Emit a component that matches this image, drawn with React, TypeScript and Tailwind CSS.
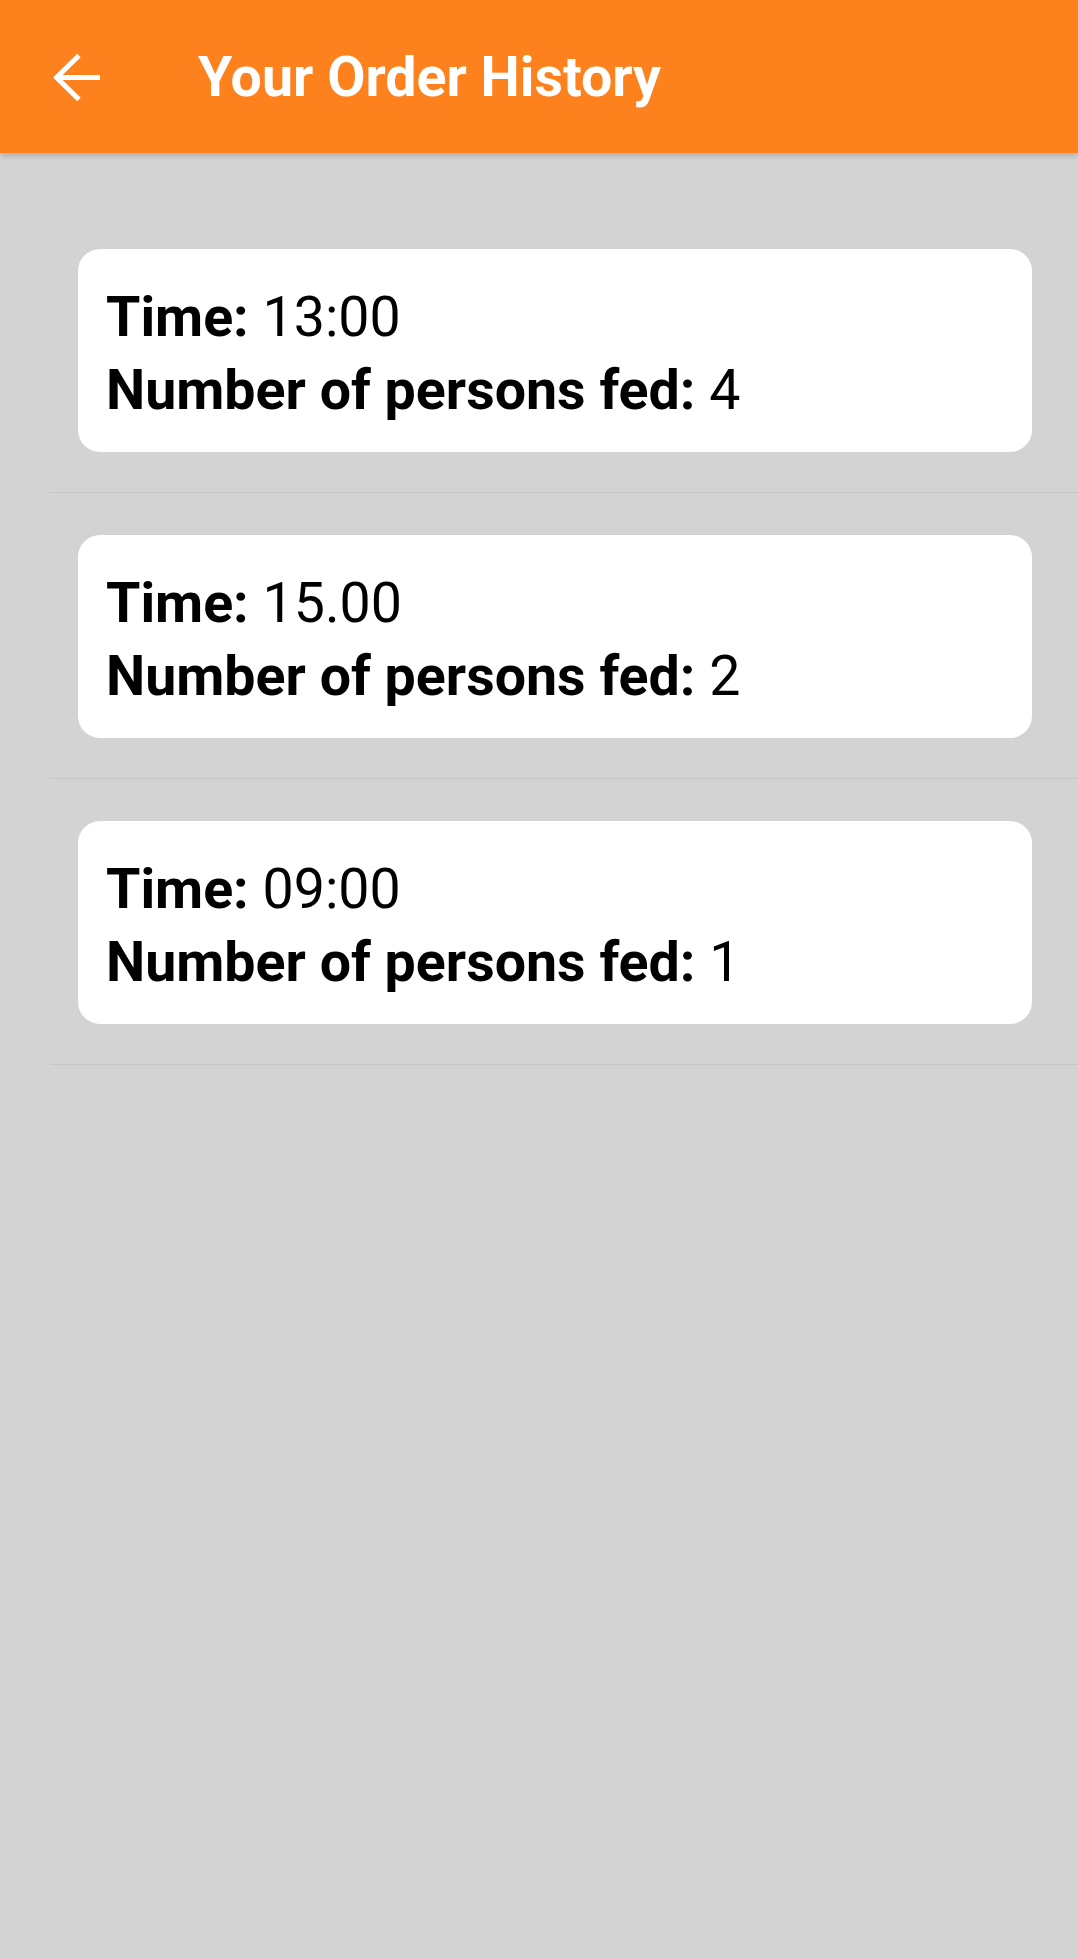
const orders = [
  { time: "13:00", persons: 4 },
  { time: "15.00", persons: 2 },
  { time: "09:00", persons: 1 },
];

function BackArrow() {
  return (
    <svg width="48" height="48" viewBox="0 0 48 48" fill="none" className="text-white">
      <path d="M47 24.5H4" stroke="currentColor" strokeWidth="5" />
      <path d="M26 2.5L3.5 24.5L26 46.5" stroke="currentColor" strokeWidth="5" />
    </svg>
  );
}

export default function App() {
  return (
    <div className="min-h-[1959px] w-full bg-[#d3d3d3] font-['Roboto',sans-serif]">
      <header className="relative z-10 flex h-[153px] items-center bg-[#fd821e] shadow-[0_3px_6px_rgba(0,0,0,0.18)]">
        <div className="ml-[53px] flex h-[48px] w-[48px] items-center justify-center">
          <BackArrow />
        </div>
        <h1 className="ml-[97px] mt-[2px] text-[55.5px] font-bold leading-none text-white">
          Your Order History
        </h1>
      </header>

      <ul className="pt-[54px]">
        {orders.map((o, i) => (
          <li key={i} className="ml-[50px] border-b border-[#c6c6c6] pt-[42px] pb-[40px]">
            <div className="ml-[28px] mr-[46px] rounded-[22px] bg-white pl-[28px] pt-[32px] pb-[25px] text-[55.5px] leading-[73px] text-black">
              <p>
                <span className="font-bold">Time:</span> {o.time}
              </p>
              <p>
                <span className="font-bold">Number of persons fed:</span> {o.persons}
              </p>
            </div>
          </li>
        ))}
      </ul>
    </div>
  );
}
